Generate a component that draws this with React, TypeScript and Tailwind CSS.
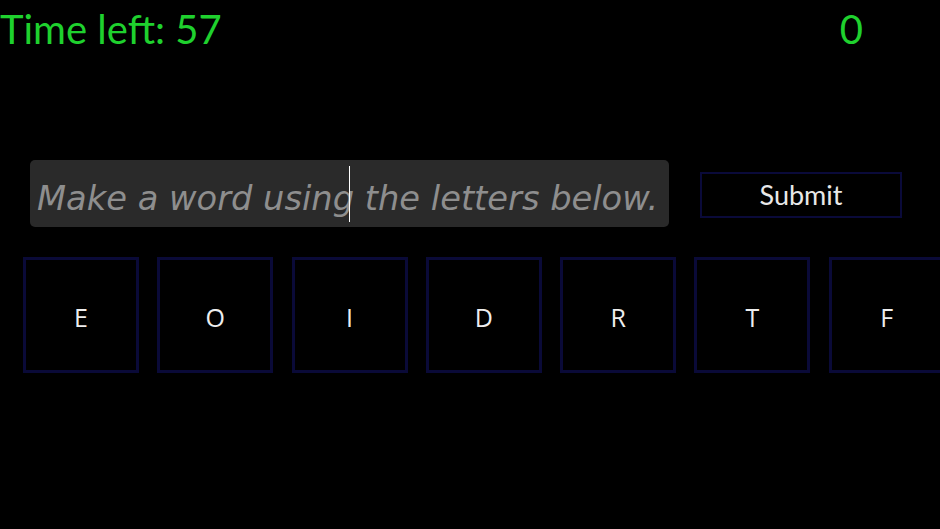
import { useState } from 'react'

const letters = ['E', 'O', 'I', 'D', 'R', 'T', 'F']

export default function App() {
  const [word, setWord] = useState('')
  const [score] = useState(0)
  const [timeLeft] = useState(57)

  return (
    <div
      className="h-[529px] w-[940px] overflow-hidden bg-black"
      style={{ fontFamily: 'Lato, "Noto Sans", sans-serif' }}
    >
      {/* Cabecera: tiempo y puntos */}
      <div className="flex h-[58px] items-center justify-between pr-[77px]">
        <span className="text-[40px] leading-none text-[#1fd12e]">Time left: {timeLeft}</span>
        <span className="text-[40px] leading-none text-[#1fd12e]">{score}</span>
      </div>

      {/* Entrada + enviar */}
      <div className="mt-[102px] flex items-center pl-[30px]">
        <div className="relative">
          <input
            value={word}
            onChange={(e) => setWord(e.target.value)}
            placeholder="Make a word using the letters below."
            className="h-[67px] w-[639px] rounded-[5px] bg-[#2a2a2a] px-[7px] pt-[10px] text-[33.7px] italic text-white placeholder:text-[#8e8e8e] focus:outline-none"
            style={{ fontFamily: '"DejaVu Sans", sans-serif' }}
          />
          <div className="absolute left-[319px] top-[6px] h-[56px] w-px bg-white" />
        </div>
        <button
          type="button"
          className="ml-[31px] mt-[3px] h-[46px] w-[202px] border-2 border-[#0a0a3a] text-[27px] text-[#e8e8e8]"
        >
          Submit
        </button>
      </div>

      {/* Fichas de letras */}
      <div className="mt-[30px] flex gap-[18.3px] pl-[23px]">
        {letters.map((l, i) => (
          <div
            key={i}
            className="flex h-[116px] w-[116px] shrink-0 items-center justify-center border-[3px] border-[#0a0a38] pt-[5px] text-[25px] text-[#eeeeee]"
            style={{ fontFamily: '"Open Sans", sans-serif' }}
          >
            {l}
          </div>
        ))}
      </div>
    </div>
  )
}
